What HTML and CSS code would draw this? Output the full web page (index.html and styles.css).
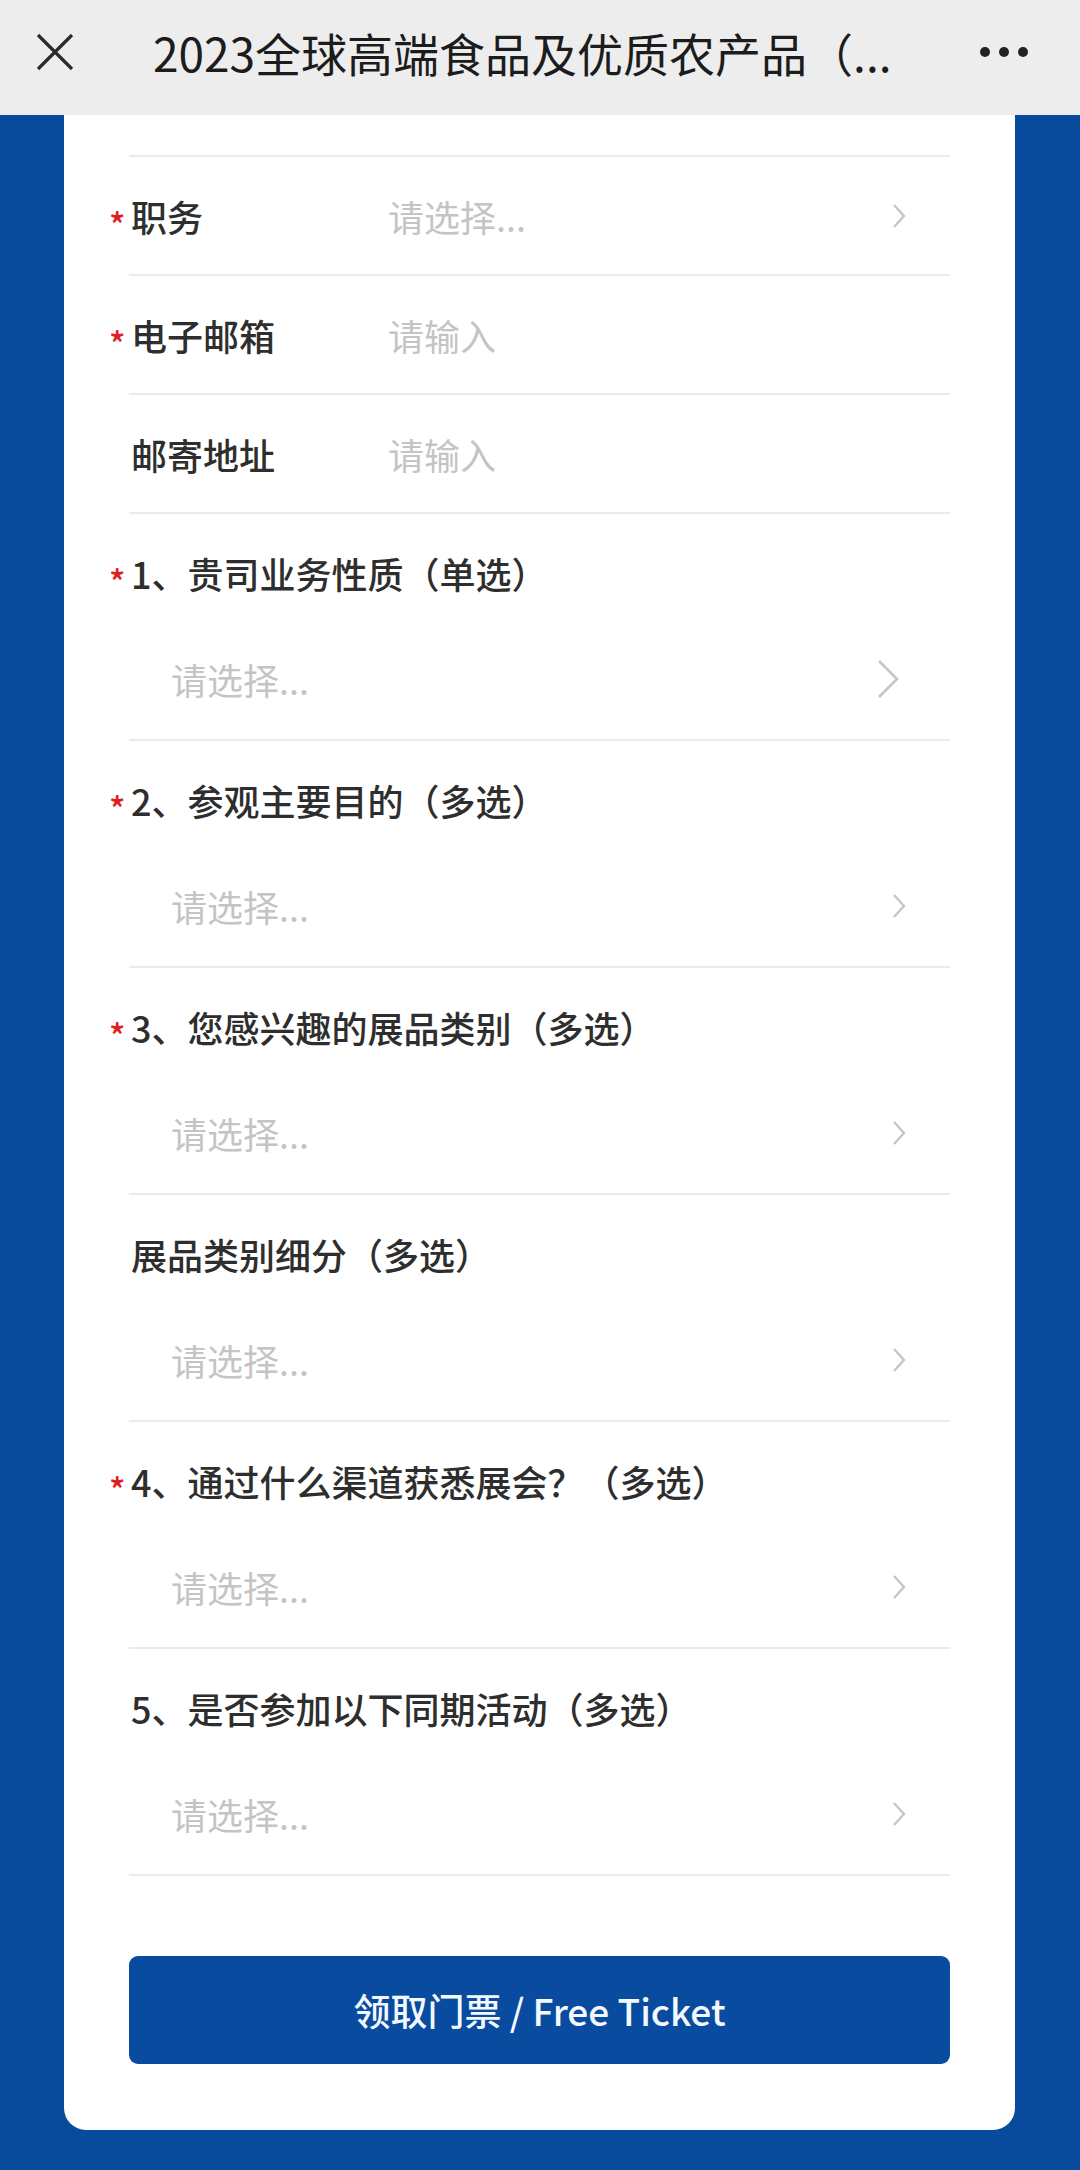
FILE: index.html
```html
<!DOCTYPE html>
<html lang="zh-CN">
<head>
  <meta charset="UTF-8">
  <title>2023全球高端食品及优质农产品（上海）博览会</title>
  <link rel="stylesheet" href="styles.css">
</head>
<body>

  <!-- 顶部栏 -->
  <div class="topbar">
    <svg class="close" width="38" height="38" viewBox="0 0 38 38">
      <path d="M2 2 L36 36 M36 2 L2 36" stroke="#2b2b2b" stroke-width="3.2" fill="none"/>
    </svg>
    <div class="title">2023全球高端食品及优质农产品（...</div>
    <div class="more"><i></i><i></i><i></i></div>
  </div>

  <div class="page">
    <div class="card">
      <div class="tail"></div>

      <div class="row">
        <div class="label"><span class="req">*</span>职务</div>
        <div class="value">请选择...</div>
        <svg class="arrow" width="14" height="26" viewBox="0 0 14 26"><path d="M2 2 L12 13 L2 24" stroke="#c6c6c6" stroke-width="2.4" fill="none"/></svg>
      </div>
      <div class="row">
        <div class="label"><span class="req">*</span>电子邮箱</div>
        <div class="value">请输入</div>
      </div>
      <div class="row">
        <div class="label">邮寄地址</div>
        <div class="value">请输入</div>
      </div>

      <div class="block">
        <div class="q"><span class="req">*</span>1、贵司业务性质（单选）</div>
        <div class="pick">
          <span>请选择...</span>
          <svg class="arrow big" width="24" height="40" viewBox="0 0 24 40"><path d="M3 2 L21 20 L3 38" stroke="#c6c6c6" stroke-width="2.6" fill="none"/></svg>
        </div>
      </div>
      <div class="block">
        <div class="q"><span class="req">*</span>2、参观主要目的（多选）</div>
        <div class="pick">
          <span>请选择...</span>
          <svg class="arrow" width="14" height="26" viewBox="0 0 14 26"><path d="M2 2 L12 13 L2 24" stroke="#c6c6c6" stroke-width="2.4" fill="none"/></svg>
        </div>
      </div>
      <div class="block">
        <div class="q"><span class="req">*</span>3、您感兴趣的展品类别（多选）</div>
        <div class="pick">
          <span>请选择...</span>
          <svg class="arrow" width="14" height="26" viewBox="0 0 14 26"><path d="M2 2 L12 13 L2 24" stroke="#c6c6c6" stroke-width="2.4" fill="none"/></svg>
        </div>
      </div>
      <div class="block">
        <div class="q">展品类别细分（多选）</div>
        <div class="pick">
          <span>请选择...</span>
          <svg class="arrow" width="14" height="26" viewBox="0 0 14 26"><path d="M2 2 L12 13 L2 24" stroke="#c6c6c6" stroke-width="2.4" fill="none"/></svg>
        </div>
      </div>
      <div class="block">
        <div class="q"><span class="req">*</span>4、通过什么渠道获悉展会？（多选）</div>
        <div class="pick">
          <span>请选择...</span>
          <svg class="arrow" width="14" height="26" viewBox="0 0 14 26"><path d="M2 2 L12 13 L2 24" stroke="#c6c6c6" stroke-width="2.4" fill="none"/></svg>
        </div>
      </div>
      <div class="block">
        <div class="q">5、是否参加以下同期活动（多选）</div>
        <div class="pick">
          <span>请选择...</span>
          <svg class="arrow" width="14" height="26" viewBox="0 0 14 26"><path d="M2 2 L12 13 L2 24" stroke="#c6c6c6" stroke-width="2.4" fill="none"/></svg>
        </div>
      </div>

      <button class="submit">领取门票 / Free Ticket</button>
    </div>
  </div>

</body>
</html>
```

FILE: styles.css
```css
body {
  margin: 0;
  background: #084b9d;
  font-family: "Noto Sans CJK SC", "Noto Sans", sans-serif;
  color: #2e2e2e;
}

/* 顶部栏 */
.topbar {
  height: 104px;
  padding: 0 0 11px 36px;
  background: #ededed;
  display: flex;
  align-items: center;
}
.close { flex: none; }
.title {
  margin-left: 79px;
  font-size: 46px;
  color: #1c1c1c;
  white-space: nowrap;
  flex: 1;
}
.more {
  display: flex;
  gap: 9px;
  margin-right: 52px;
}
.more i {
  width: 10px;
  height: 10px;
  border-radius: 50%;
  background: #222;
}

.page {
  padding: 0 65px 0 64px;
  height: 2055px;
}
.card {
  background: #fff;
  border-radius: 0 0 22px 22px;
  padding: 0 65px 66px;
}
.tail {
  height: 40px;
  border-bottom: 2px solid #ebebeb;
}

.req {
  display: inline-block;
  width: 22px;
  margin-left: -22px;
  line-height: 0;
  color: #e02020;
  font-size: 34px;
  vertical-align: -6px;
}

.row {
  height: 117px;
  padding-left: 2px;
  border-bottom: 2px solid #ebebeb;
  display: flex;
  align-items: center;
  font-size: 36px;
}
.label {
  width: 257px;
  font-weight: 500;
  color: #2e2e2e;
}
.value {
  flex: 1;
  color: #c4c4c4;
}
.arrow { margin-right: 44px; }
.arrow.big { margin-right: 50px; }

.block {
  border-bottom: 2px solid #ebebeb;
}
.q {
  padding: 38px 0 25px 2px;
  line-height: 42px;
  height: 42px;
  font-size: 36px;
  font-weight: 500;
}
.pick {
  height: 120px;
  padding-left: 42px;
  display: flex;
  align-items: center;
  justify-content: space-between;
  font-size: 36px;
  color: #c4c4c4;
}

.submit {
  display: block;
  width: 100%;
  height: 108px;
  margin-top: 80px;
  border: none;
  border-radius: 9px;
  background: #084b9f;
  color: #f4f8ff;
  font-family: "Noto Sans CJK SC", "Noto Sans", sans-serif;
  font-size: 37px;
  font-weight: 500;
  cursor: pointer;
}
```
